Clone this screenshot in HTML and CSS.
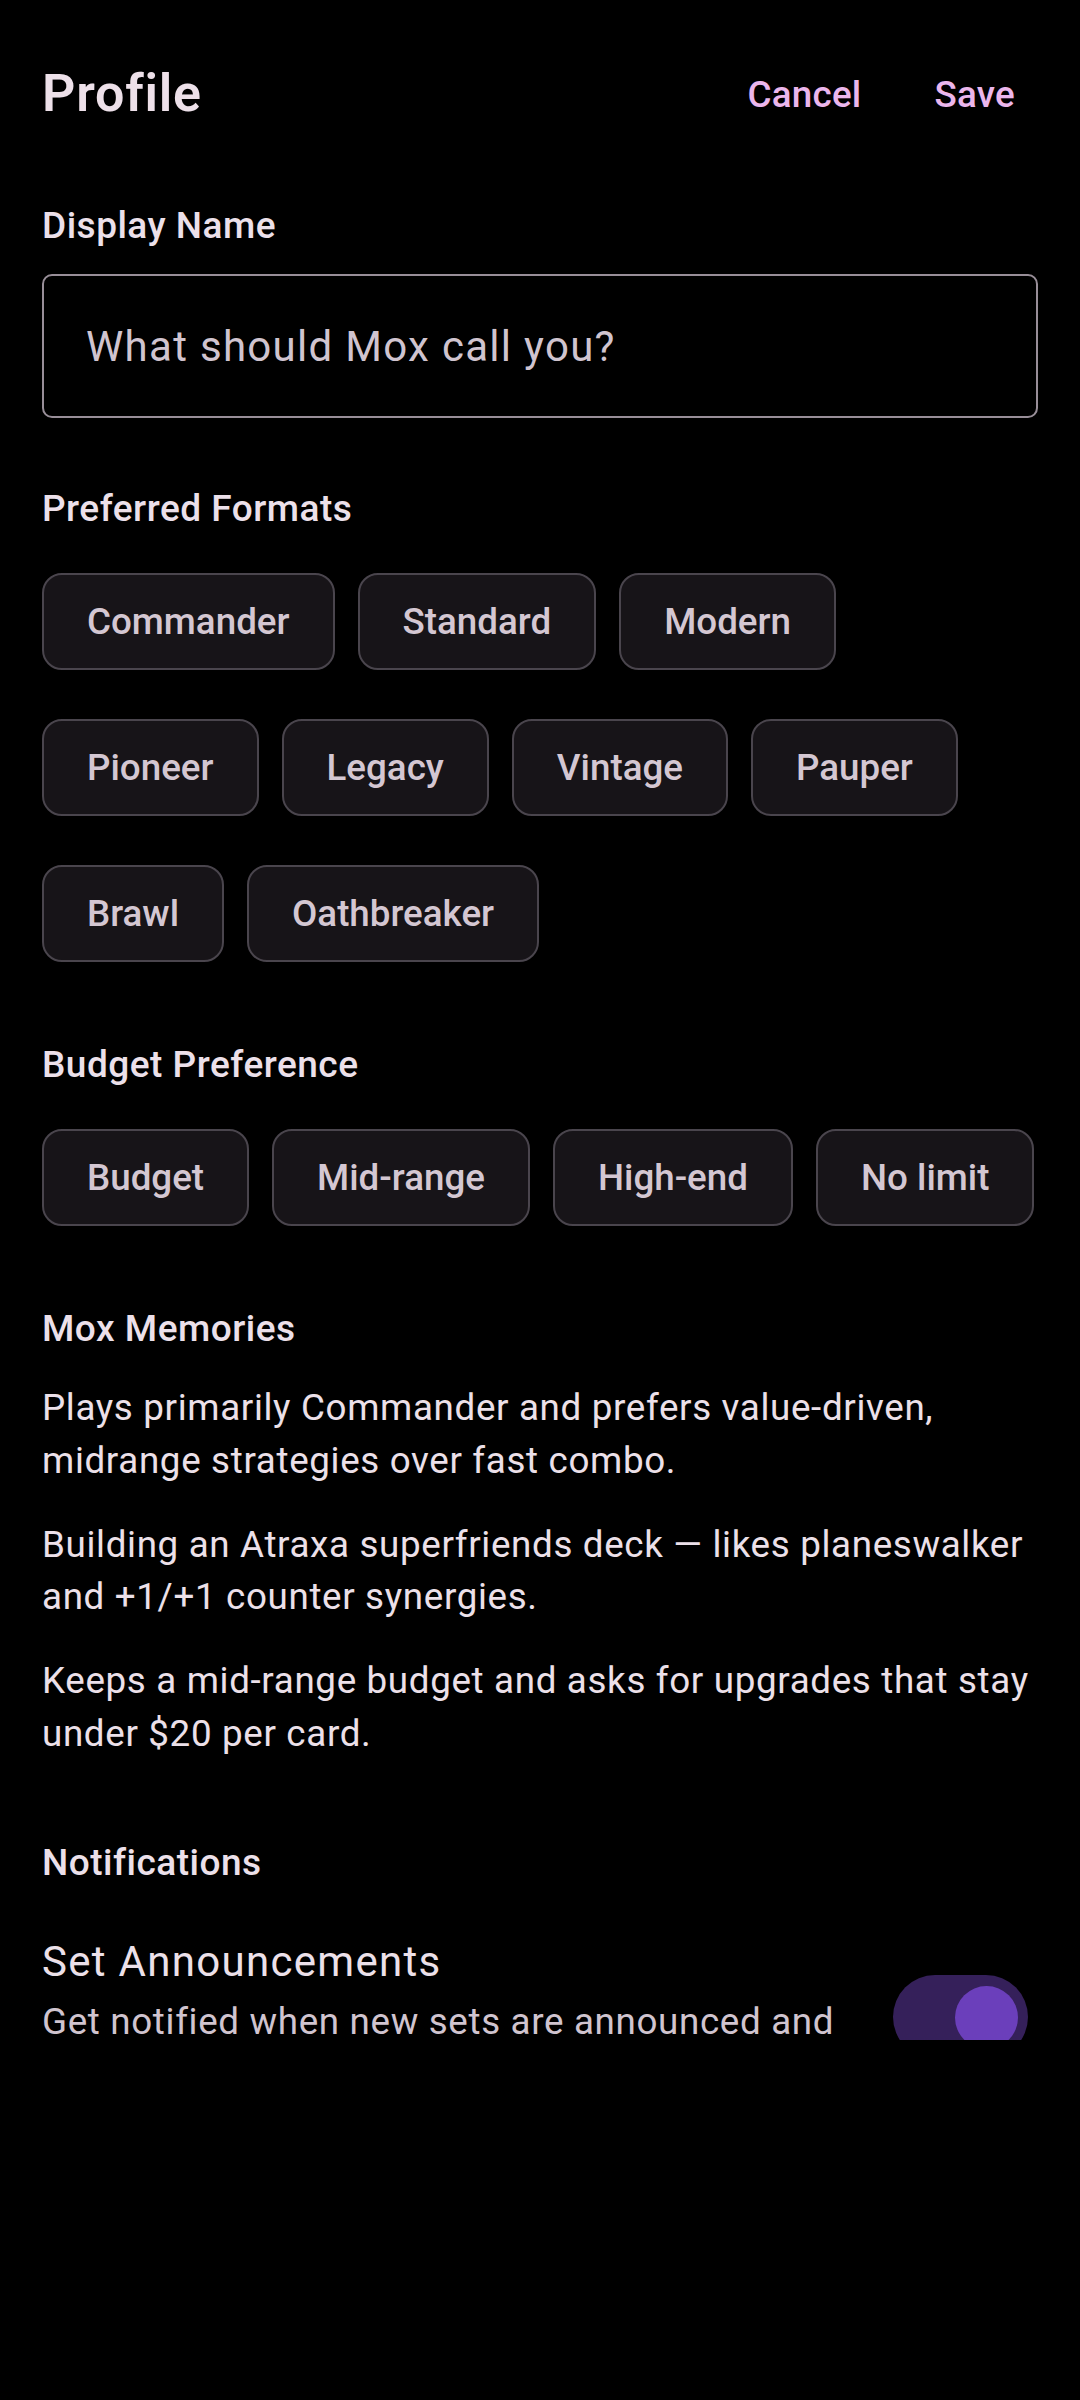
FILE: index.html
```html
<!DOCTYPE html>
<html lang="en">
<head>
  <meta charset="UTF-8">
  <title>Profile</title>
  <link rel="stylesheet" href="styles.css">
</head>
<body>

<div class="screen">
  <div class="scroll">
    <header class="topbar">
      <h1 class="title">Profile</h1>
      <div class="actions">
        <button class="text-btn">Cancel</button>
        <button class="text-btn">Save</button>
      </div>
    </header>

    <label class="section-label first" for="displayName">Display Name</label>
    <input class="text-input" id="displayName" type="text" placeholder="What should Mox call you?">

    <div class="section-label formats-label">Preferred Formats</div>
    <div class="chips">
      <span class="chip">Commander</span>
      <span class="chip">Standard</span>
      <span class="chip">Modern</span>
      <span class="chip">Pioneer</span>
      <span class="chip">Legacy</span>
      <span class="chip">Vintage</span>
      <span class="chip">Pauper</span>
      <span class="chip">Brawl</span>
      <span class="chip">Oathbreaker</span>
    </div>

    <div class="section-label">Budget Preference</div>
    <div class="chips single-row">
      <span class="chip">Budget</span>
      <span class="chip">Mid-range</span>
      <span class="chip">High-end</span>
      <span class="chip">No limit</span>
    </div>

    <div class="section-label">Mox Memories</div>
    <div class="memories">
      <p>Plays primarily Commander and prefers value-driven, midrange strategies over fast combo.</p>
      <p>Building an Atraxa superfriends deck — likes planeswalker and +1/+1 counter synergies.</p>
      <p>Keeps a mid-range budget and asks for upgrades that stay under $20 per card.</p>
    </div>

    <div class="section-label">Notifications</div>
    <div class="list-item">
      <div class="item-text">
        <div class="item-headline">Set Announcements</div>
        <div class="item-support">Get notified when new sets are announced and released</div>
      </div>
      <div class="switch on"><span class="thumb"></span></div>
    </div>
  </div>
</div>

</body>
</html>
```

FILE: styles.css
```css
body {
  margin: 0;
  background-color: #000;
  font-family: Roboto, "Noto Sans", sans-serif;
  color: #ece0e9;
}
.screen {
  width: 1080px;
  height: 2400px;
  background: #000;
}
.scroll {
  height: 2040px;
  overflow: hidden;
  padding: 0 42px;
  box-sizing: border-box;
}
.topbar {
  height: 188px;
  display: flex;
  align-items: center;
  justify-content: space-between;
}
.title {
  margin: 0;
  font-size: 52px;
  font-weight: 600;
  line-height: 60px;
  letter-spacing: 0.8px;
  color: #ede0e9;
}
.actions {
  display: flex;
  gap: 21px;
}
.text-btn {
  background: none;
  border: none;
  padding: 0 26px;
  height: 84px;
  font-family: Roboto, sans-serif;
  font-size: 36.75px;
  font-weight: 500;
  letter-spacing: 0.26px;
  color: #ebb6ec;
  cursor: pointer;
}
.text-btn:last-child {
  padding-right: 23px;
}
.section-label {
  display: block;
  margin-top: 83px;
  font-size: 37px;
  font-weight: 500;
  line-height: 40px;
  letter-spacing: 0.5px;
  color: #ece0ea;
}
.section-label.first {
  margin-top: 18px;
}
.text-input {
  display: block;
  width: 100%;
  height: 144px;
  margin-top: 28px;
  box-sizing: border-box;
  background: #000;
  border: 2px solid #988e98;
  border-radius: 10px;
  padding: 0 42px;
  font-family: Roboto, sans-serif;
  font-size: 42px;
  letter-spacing: 1.3px;
  color: #ece0e9;
  outline: none;
}
.text-input::placeholder {
  color: #d0c4cf;
}
.formats-label {
  margin-top: 71px;
}
.chips {
  display: flex;
  flex-wrap: wrap;
  column-gap: 23px;
  row-gap: 49px;
  margin-top: 44px;
}
.chips.single-row {
  flex-wrap: nowrap;
}
.chip {
  display: flex;
  align-items: center;
  flex-shrink: 0;
  height: 97px;
  box-sizing: border-box;
  padding: 0 43px;
  background: #171418;
  border: 2px solid #4a454d;
  border-radius: 20px;
  font-size: 36.75px;
  font-weight: 500;
  color: #d4c7d2;
}
.memories {
  margin-top: 33px;
}
.memories p {
  margin: 0 0 31.5px;
  font-size: 36.75px;
  line-height: 52.5px;
  letter-spacing: 0.66px;
  color: #ece0e9;
}
.list-item {
  display: flex;
  align-items: center;
  gap: 42px;
  margin-top: 47px;
}
.item-text {
  flex: 1;
}
.item-headline {
  font-size: 42px;
  line-height: 63px;
  letter-spacing: 1.3px;
  color: #ece0e9;
}
.item-support {
  margin-top: 3px;
  font-size: 36.75px;
  line-height: 52.5px;
  letter-spacing: 0.66px;
  color: #d0c4cf;
}
.switch {
  position: relative;
  width: 135px;
  height: 84px;
  margin-right: 10px;
  margin-top: 2px;
  border-radius: 42px;
  background: #35205a;
  flex-shrink: 0;
}
.switch .thumb {
  position: absolute;
  top: 11px;
  right: 10px;
  width: 63px;
  height: 63px;
  border-radius: 50%;
  background: #6b3fbb;
}
```
